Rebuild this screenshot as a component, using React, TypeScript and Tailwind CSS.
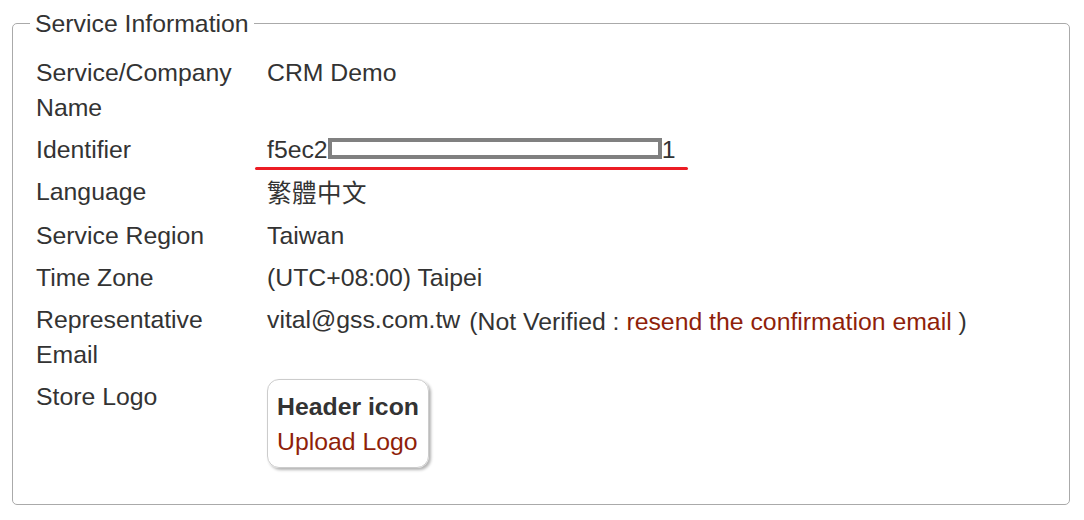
import React from 'react';

const font = '"Liberation Sans", Arial, "Noto Sans CJK TC", sans-serif';

const Row = ({ label, children }: { label: React.ReactNode; children?: React.ReactNode }) => (
  <div className="grid grid-cols-[231px_1fr] py-[3.5px] leading-[35px]">
    <div>{label}</div>
    <div>{children}</div>
  </div>
);

export default function App() {
  return (
    <div className="bg-white w-[1084px] h-[520px] pt-[6px] text-[24.8px] text-[#333]" style={{ fontFamily: font }}>
      <fieldset className="ml-[12px] mr-[14px] border border-[#aaa] rounded-[5px] pl-[23px] pr-[20px] pt-[10.5px] pb-[32px]">
        <legend className="ml-[-6px] px-[5px] leading-[35px]">Service Information</legend>

        <Row label={<>Service/Company<br />Name</>}>CRM Demo</Row>

        <Row label="Identifier">
          <span className="relative inline-block">
            f5ec2
            <span className="inline-block w-[334px] h-[21px] border-[4px] border-[#808080] bg-white align-[-1px]" />
            1
            <span className="absolute left-[-12px] top-[35px] w-[433px] h-[3px] rounded-full bg-[#ec1c24]" />
          </span>
        </Row>

        <Row label="Language">
          <span style={{ fontFamily: '"Noto Sans CJK TC", sans-serif' }} className="text-[24.5px] tracking-[0.5px]">
            繁體中文
          </span>
        </Row>

        <Row label="Service Region">Taiwan</Row>

        <Row label="Time Zone">(UTC+08:00) Taipei</Row>

        <Row label={<>Representative<br />Email</>}>
          vital@gss.com.tw
          <span className="ml-[9px] align-[-2px]">
            (Not Verified : <a className="text-[#8f1f0a]">resend the confirmation email</a> )
          </span>
        </Row>

        <Row label="Store Logo">
          <div className="inline-flex h-[89px] flex-col justify-center whitespace-nowrap rounded-[12px] border border-[#ccc] px-[9px] shadow-[2px_2px_3px_rgba(0,0,0,0.3)]">
            <span className="font-bold">Header icon</span>
            <a className="text-[#8f1f0a]">Upload Logo</a>
          </div>
        </Row>
      </fieldset>
    </div>
  );
}
